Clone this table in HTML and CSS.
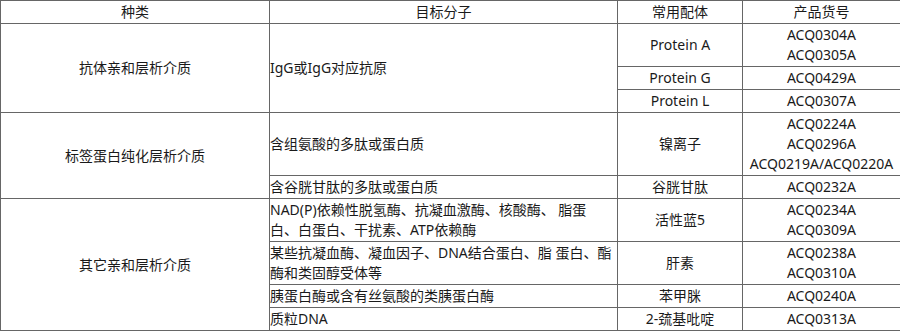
FILE: index.html
```html
<!DOCTYPE html>
<html lang="zh-CN">
<head>
    <meta charset="UTF-8">
    <title>亲和层析介质</title>
    <link rel="stylesheet" href="styles.css">
</head>
<body>
    <table class="media-table">
        <colgroup>
            <col class="col-kind">
            <col class="col-target">
            <col class="col-ligand">
            <col class="col-code">
        </colgroup>
        <thead>
            <tr>
                <th>种类</th>
                <th>目标分子</th>
                <th>常用配体</th>
                <th>产品货号</th>
            </tr>
        </thead>
        <tbody>
            <tr>
                <td class="center" rowspan="3">抗体亲和层析介质</td>
                <td rowspan="3">IgG或IgG对应抗原</td>
                <td class="center">Protein A</td>
                <td class="center">ACQ0304A<br>ACQ0305A</td>
            </tr>
            <tr>
                <td class="center">Protein G</td>
                <td class="center">ACQ0429A</td>
            </tr>
            <tr>
                <td class="center">Protein L</td>
                <td class="center">ACQ0307A</td>
            </tr>
            <tr>
                <td class="center" rowspan="2">标签蛋白纯化层析介质</td>
                <td>含组氨酸的多肽或蛋白质</td>
                <td class="center">镍离子</td>
                <td class="center">ACQ0224A<br>ACQ0296A<br>ACQ0219A/ACQ0220A</td>
            </tr>
            <tr>
                <td>含谷胱甘肽的多肽或蛋白质</td>
                <td class="center">谷胱甘肽</td>
                <td class="center">ACQ0232A</td>
            </tr>
            <tr>
                <td class="center" rowspan="4">其它亲和层析介质</td>
                <td>NAD(P)依赖性脱氢酶、抗凝血激酶、核酸酶、 脂蛋<br>白、白蛋白、干扰素、ATP依赖酶</td>
                <td class="center">活性蓝5</td>
                <td class="center">ACQ0234A<br>ACQ0309A</td>
            </tr>
            <tr>
                <td>某些抗凝血酶、凝血因子、DNA结合蛋白、脂 蛋白、酯<br>酶和类固醇受体等</td>
                <td class="center">肝素</td>
                <td class="center">ACQ0238A<br>ACQ0310A</td>
            </tr>
            <tr>
                <td>胰蛋白酶或含有丝氨酸的类胰蛋白酶</td>
                <td class="center">苯甲脒</td>
                <td class="center">ACQ0240A</td>
            </tr>
            <tr>
                <td>质粒DNA</td>
                <td class="center">2-巯基吡啶</td>
                <td class="center">ACQ0313A</td>
            </tr>
        </tbody>
    </table>
</body>
</html>
```

FILE: styles.css
```css
body {
    margin: 0;
    background: #fff;
    font-family: "Noto Sans", "Noto Sans CJK SC", sans-serif;
    font-size: 14px;
    color: #1a1a1a;
}
.media-table {
    width: 900px;
    border-collapse: collapse;
    table-layout: fixed;
}
.col-kind {
    width: 269px;
}
.col-target {
    width: 348px;
}
.col-ligand {
    width: 125px;
}
.col-code {
    width: 158px;
}
.media-table th,
.media-table td {
    border: 1px solid #666;
    padding: 1px 0;
    line-height: 20px;
    vertical-align: middle;
    text-align: left;
    white-space: nowrap;
}
.media-table th {
    font-weight: normal;
    text-align: center;
}
.media-table td.center {
    text-align: center;
}
```
